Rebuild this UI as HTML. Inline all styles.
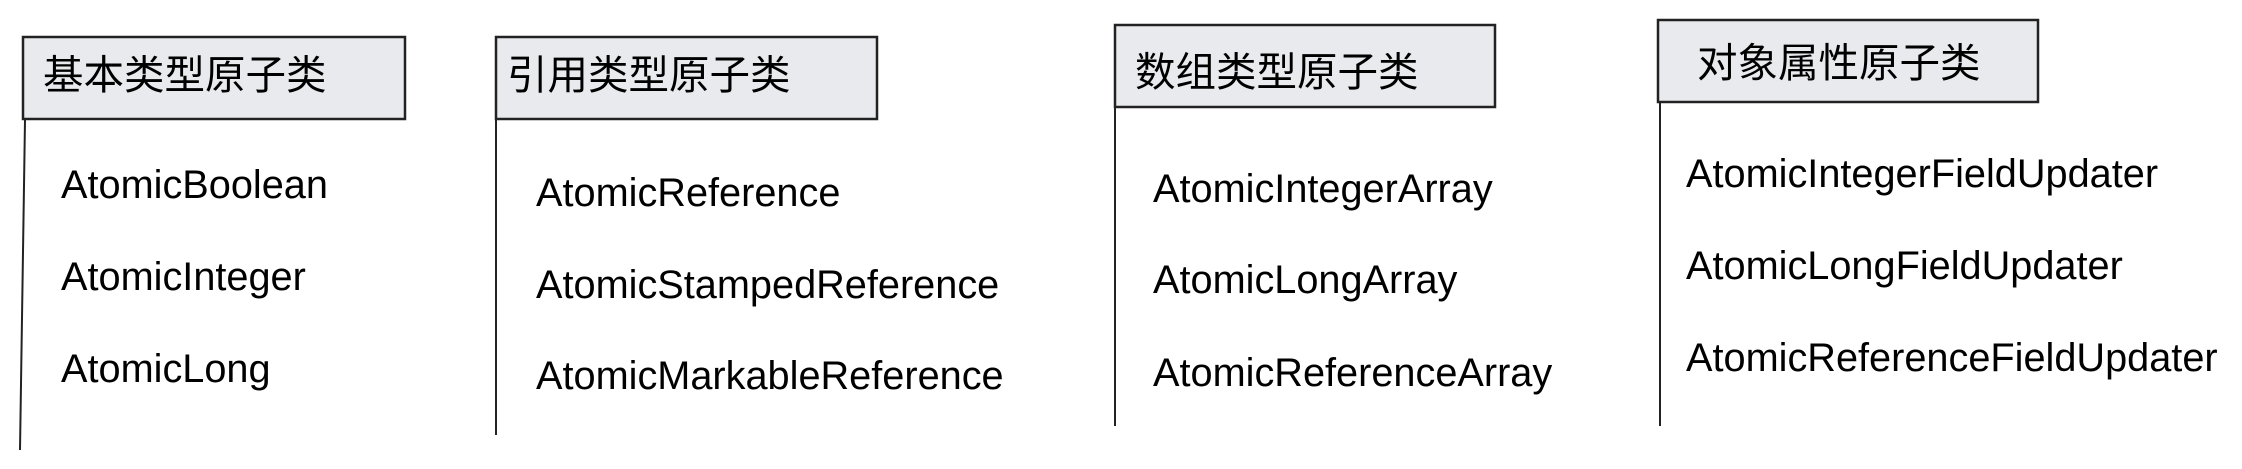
<!DOCTYPE html>
<html><head><meta charset="utf-8"><style>
html,body{margin:0;padding:0;background:#fff;width:2242px;height:469px;overflow:hidden}
svg{display:block}
text{font-family:"Liberation Sans","Noto Sans CJK SC",sans-serif;fill:#000}
.t{font-size:39.7px}
.h{font-size:40.5px}
</style></head><body>
<svg width="2242" height="469" xmlns="http://www.w3.org/2000/svg">
<g stroke="#222" fill="#e8eaed" stroke-width="2.5">
<rect x="23" y="37" width="382" height="82"/>
<rect x="496" y="37" width="381" height="82"/>
<rect x="1115" y="25" width="380" height="82"/>
<rect x="1658" y="20" width="380" height="82"/>
</g>
<g stroke="#222" stroke-width="2">
<line x1="25" y1="120" x2="20" y2="450"/>
<line x1="496" y1="120" x2="496" y2="435"/>
<line x1="1115" y1="107" x2="1115" y2="426"/>
<line x1="1660" y1="102" x2="1660" y2="426"/>
</g>
<text class="h" x="43" y="89">基本类型原子类</text>
<text class="h" x="507" y="89">引用类型原子类</text>
<text class="h" x="1135" y="86">数组类型原子类</text>
<text class="h" x="1697" y="77">对象属性原子类</text>
<text class="t" x="61" y="198">AtomicBoolean</text>
<text class="t" x="61" y="290">AtomicInteger</text>
<text class="t" x="61" y="382">AtomicLong</text>
<text class="t" x="536" y="206">AtomicReference</text>
<text class="t" x="536" y="298">AtomicStampedReference</text>
<text class="t" x="536" y="389">AtomicMarkableReference</text>
<text class="t" x="1153" y="202">AtomicIntegerArray</text>
<text class="t" x="1153" y="293">AtomicLongArray</text>
<text class="t" x="1153" y="386">AtomicReferenceArray</text>
<text class="t" x="1686" y="187">AtomicIntegerFieldUpdater</text>
<text class="t" x="1686" y="279">AtomicLongFieldUpdater</text>
<text class="t" x="1686" y="371">AtomicReferenceFieldUpdater</text>
</svg>
</body></html>
